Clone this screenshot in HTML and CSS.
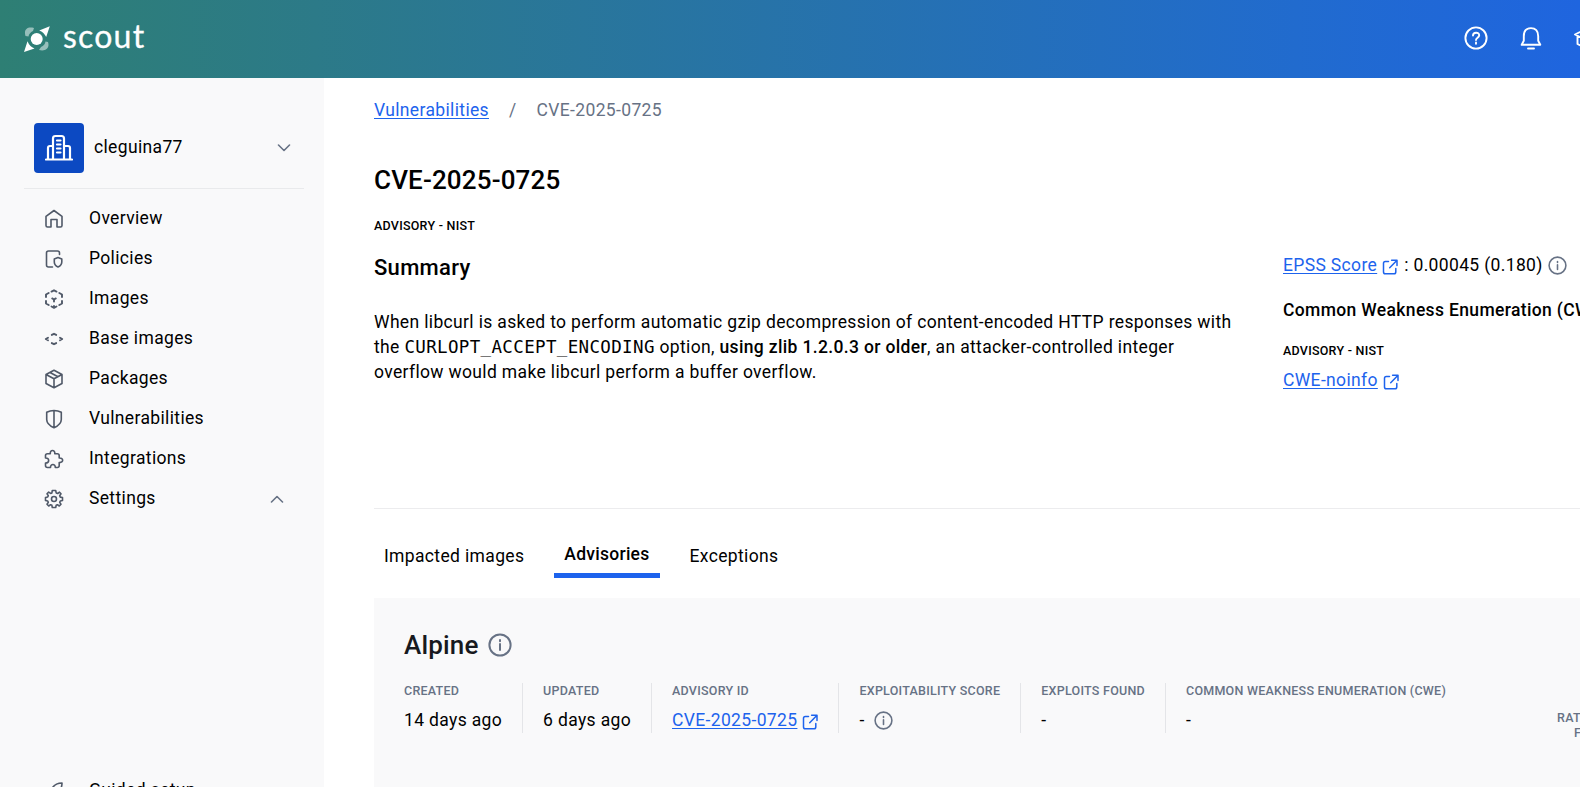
FILE: index.html
```html
<!DOCTYPE html>
<html lang="en">
<head>
<meta charset="utf-8">
<title>CVE-2025-0725 | Docker Scout</title>
<link rel="stylesheet" href="styles.css">
</head>
<body>
<svg class="defs" width="0" height="0" aria-hidden="true">
  <symbol id="ext" viewBox="0 0 16 16"><path d="M6.5 2.4H3.3Q1.5 2.4 1.5 4.2V13Q1.5 14.8 3.3 14.8H12Q13.8 14.8 13.8 13V9.6M9.6 1.3H15V6.6M14.8 1.5 7.7 8.8"/></symbol>
  <symbol id="info" viewBox="0 0 24 24"><circle cx="12" cy="12" r="10.6"/><path d="M12 11V17M12 7.1V8.2"/></symbol>
</svg>
<header class="topbar">
  <a class="brand">
    <svg class="brand-mark" viewBox="0 0 26 26"><g fill="#fff"><path opacity=".5" d="M1.500 10C-.5 4 3 .2 10 2L9 5Q5 7 4.500 10.500ZM24 16C26 21.500 22 26 15 24L17 21Q21 19 21.500 15.500Z"/><circle cx="12.7" cy="13" r="6"/><path d="M15.2 4.4 25.8.2 22.2 11Q20 6.300 15.200 4.400ZM10.500 22.500 0 26 3.500 15.200Q5.500 20.500 10.500 22.500Z"/></g></svg>
    <span class="brand-name">scout</span>
  </a>
  <div class="top-actions">
    <svg class="top-icon" viewBox="0 0 24 24"><circle cx="12" cy="12" r="10.6"/><path d="M9 9.500C9 5.800 15.200 5.800 15.200 9.300 15.200 11.700 12 11.700 12 14M12 16.500V17.700"/></svg>
    <svg class="top-icon" viewBox="0 0 24 24"><path d="M2.700 18.800H21.300L19.200 14.800V10.200C19.200 5 16.500 2.100 12 2.100S4.800 5 4.800 10.200V14.800ZM9 22.500H15"/></svg>
    <svg class="top-icon" viewBox="0 0 24 24"><path d="M1 8.500 12 3 23 8.500 12 14ZM3.500 10V18Q12 23 20.500 18V10"/></svg>
  </div>
</header>
<div class="layout">
  <aside class="sidebar">
    <div class="account">
      <span class="avatar"><svg viewBox="0 0 28 28"><path d="M1 25.500H27M8 25V4.500Q8 2 10.500 2H16.500Q19 2 19 4.500V25M8 12H5Q3 12 3 14V25M19 12H23Q25 12 25 14V25M12 6.500H15.500M12 10.500H15.500M12 14.500H15.500M12 18.500H15.500"/></svg></span>
      <span class="account-name">cleguina77</span>
      <svg class="chevron" viewBox="0 0 14 8"><path d="M1.500 1 7 6.500 12.500 1"/></svg>
    </div>
    <nav class="nav">
      <a class="nav-item"><svg viewBox="0 0 20 20"><path d="M2 7.300 10 1.500 18 7.300V16.500Q18 18 16.500 18H13V10.500H7V18H3.500Q2 18 2 16.500Z"/></svg>Overview</a>
      <a class="nav-item"><svg viewBox="0 0 20 20"><path d="M8.500 18H4.500Q2.500 18 2.500 16V4Q2.500 2 4.500 2H13.500Q15.500 2 15.500 4V5.500M14 8.500 17.800 10V13Q17.800 16.300 14 18 10.300 16.300 10.300 13V10Z"/></svg>Policies</a>
      <a class="nav-item"><svg class="heavy" viewBox="0 0 20 20"><path d="M7.500 2.600 10 1.300 12.500 2.600M15.300 4 18 5.500V8M18 12V14.500L15.300 16M12.500 17.500 10 18.800 7.500 17.500M4.700 16 2 14.500V12M2 8V5.500L4.700 4M10 10.500V12.500M10 10.500 8.200 9.400M10 10.500 11.800 9.400M10 17V18.500"/></svg>Images</a>
      <a class="nav-item"><svg class="heavy" viewBox="0 0 20 20"><path d="M7.800 5.900 10 4.800 12.200 5.900M12.200 14.100 10 15.200 7.800 14.100M4 8.700 1.800 10 4 11.300M16 8.700 18.200 10 16 11.300"/></svg>Base images</a>
      <a class="nav-item"><svg viewBox="0 0 20 20"><path d="M10 1.300 18 5.500V14.500L10 18.700 2 14.500V5.500ZM2 5.500 10 9.800 18 5.500M10 9.800V18.700M6 3.500 14 7.700"/></svg>Packages</a>
      <a class="nav-item"><svg viewBox="0 0 20 20"><path d="M10 1.500Q14 1.500 17.300 3.300V10.500Q17.300 15.500 10 18.700 2.700 15.500 2.700 10.500V3.300Q6 1.500 10 1.500ZM10 1.500V18.500"/></svg>Vulnerabilities</a>
      <a class="nav-item"><svg viewBox="0 0 20 20"><path d="M6.300 4.700C5.800 .4 11.200 .4 10.800 4.700H13.300Q15.200 4.700 15.200 6.600V9C19.800 8.500 19.800 14 15.200 13.600V16.500Q15.200 18.500 13.300 18.500H11.300C11.500 14.500 6.300 14.500 6.500 18.500H3.500Q1.500 18.500 1.500 16.500V14C5.700 14 5.700 8.800 1.500 9V6.600Q1.500 4.700 3.500 4.700Z"/></svg>Integrations</a>
      <a class="nav-item"><svg viewBox="0 0 20 20"><path d="M8.300 1.500H11.700L12.200 3.900 13.700 4.500 15.500 3.200 17 4.800 15.700 6.700 16.300 8.100 18.500 8.500V11.500L16.300 12 15.700 13.400 17 15.200 15.300 17 13.400 15.700 12.200 16.300 11.700 18.500H8.300L7.900 16.300 6.600 15.700 4.700 17 3 15.300 4.300 13.400 3.700 12 1.500 11.500V8.500L3.700 8 4.300 6.600 3 4.800 4.700 3.100 6.600 4.400 7.900 3.900Z"/><circle cx="10" cy="10" r="2.500"/></svg>Settings<svg class="chevron nav-chevron" viewBox="0 0 14 8"><path d="M1.500 7 7 1.500 12.500 7"/></svg></a>
    </nav>
    <nav class="nav nav-bottom">
      <a class="nav-item"><svg viewBox="0 0 20 20"><path d="M6 12C8 5 12 2 18 2 18 8 15 12 8 14ZM7.500 8H4.500L2 12H6M12 12.500V15.500L8 18V14"/></svg>Guided setup</a>
    </nav>
  </aside>
  <main class="main">
    <div class="breadcrumb"><a class="link">Vulnerabilities</a><span class="slash">/</span><span>CVE-2025-0725</span></div>
    <h1 class="title">CVE-2025-0725</h1>
    <div class="source">ADVISORY - NIST</div>
    <div class="details">
      <section class="summary">
        <h2>Summary</h2>
        <p>When libcurl is asked to perform automatic gzip decompression of content-encoded HTTP responses with the <code>CURLOPT_ACCEPT_ENCODING</code> option, <strong>using zlib 1.2.0.3 or older</strong>, an attacker-controlled integer overflow would make libcurl perform a buffer overflow.</p>
      </section>
      <section class="facts">
        <div class="epss"><a class="link">EPSS Score</a><svg class="ext"><use href="#ext"/></svg><span>: 0.00045 (0.180)</span><svg class="info"><use href="#info"/></svg></div>
        <h3>Common Weakness Enumeration (CWE)</h3>
        <div class="source">ADVISORY - NIST</div>
        <div class="cwe"><a class="link">CWE-noinfo</a><svg class="ext"><use href="#ext"/></svg></div>
      </section>
    </div>
    <div class="tabs"><a class="tab">Impacted images</a><a class="tab active">Advisories</a><a class="tab">Exceptions</a></div>
    <section class="card">
      <h2 class="card-title">Alpine<svg class="info info-large"><use href="#info"/></svg></h2>
      <div class="card-row">
        <div class="fact"><span class="label">CREATED</span><span class="value">14 days ago</span></div>
        <div class="fact"><span class="label">UPDATED</span><span class="value">6 days ago</span></div>
        <div class="fact"><span class="label">ADVISORY ID</span><span class="value"><a class="link">CVE-2025-0725</a><svg class="ext"><use href="#ext"/></svg></span></div>
        <div class="fact"><span class="label">EXPLOITABILITY SCORE</span><span class="value">-<svg class="info"><use href="#info"/></svg></span></div>
        <div class="fact"><span class="label">EXPLOITS FOUND</span><span class="value">-</span></div>
        <div class="fact"><span class="label">COMMON WEAKNESS ENUMERATION (CWE)</span><span class="value">-</span></div>
        <div class="rating"><span>RATINGS</span><span>FOR</span></div>
      </div>
    </section>
  </main>
</div>
</body>
</html>
```
FILE: styles.css
```css
* { box-sizing: border-box; }
html { overflow: hidden; }
body {
  margin: 0; height: 787px; overflow: hidden; background: #fff; color: #000;
  font: 17.5px/25px Roboto, sans-serif; letter-spacing: 0.35px;
}
svg { fill: none; stroke: currentColor; stroke-linejoin: round; stroke-linecap: round; flex: none; }
.defs { display: none; }
h1, h2, h3, p { margin: 0; font-weight: 500; }
p { font-weight: 400; }
.topbar {
  height: 78px; display: flex; align-items: center; justify-content: space-between; padding: 0 0 0 24px;
  color: #fff; background: linear-gradient(90deg, #2e7f74 0, #2c7a88 20%, #216bce 82%, #1f65df 100%); overflow: hidden;
}
.brand { display: flex; align-items: center; gap: 13px; margin-top: -1px; }
.brand-mark { width: 26px; height: 26px; stroke: none; }
.brand-name { font: 32px/40px Lato, sans-serif; letter-spacing: 1.2px; margin-top: -6px; -webkit-text-stroke: 0.3px #fff; }
.top-actions { display: flex; gap: 31px; margin: -3px -18px 0 0; }
.top-icon { width: 24px; height: 24px; stroke-width: 1.9; }
.layout { display: flex; height: 709px; }
.sidebar { width: 324px; flex: none; background: #f9f9fa; padding: 45px 20px 0 24px; display: flex; flex-direction: column; }
.account { height: 66px; border-bottom: 1px solid #e9eaec; padding: 0 13px 15px 10px; display: flex; align-items: center; flex: none; }
.avatar { width: 50px; height: 50px; border-radius: 4px; background: #0c49c2; display: flex; align-items: center; justify-content: center; color: #fff; margin-right: 10px; }
.avatar svg { width: 28px; height: 28px; stroke-width: 2.2; }
.account-name { flex: 1; margin-top: -2px; }
.chevron { width: 14px; height: 8px; color: #677285; stroke-width: 1.6; }
.nav { padding: 9px 20px 0 20px; }
.nav-item { display: flex; align-items: center; height: 40px; }
.nav-item > svg:first-child { width: 20px; height: 20px; color: #505968; stroke-width: 1.6; margin: 2px 25px 0 0; }
.nav-item > svg.heavy:first-child { stroke-width: 1.9; }
.nav-item .nav-chevron { margin-left: auto; margin-top: 2px; }
.nav-bottom { margin-top: 243px; }
.main { width: 1340px; flex: none; padding: 20px 0 0 50px; }
.link { color: #1d63ed; text-decoration: underline; text-underline-offset: 2px; }
.breadcrumb { display: flex; color: #677285; }
.slash { margin: 0 20px; }
.title { font-size: 26px; line-height: 32px; margin-top: 41px; letter-spacing: 0.16px; }
.source { font-size: 12.5px; line-height: 20px; font-weight: 500; margin-top: 20px; letter-spacing: 0.25px; }
.details { display: flex; height: 273px; border-bottom: 1px solid #ececee; padding-top: 17px; }
.summary { width: 863px; margin-right: 46px; flex: none; }
.summary h2 { font-size: 22px; line-height: 30px; margin-bottom: 27px; letter-spacing: 0.3px; }
code { font-family: "DejaVu Sans Mono", monospace; font-size: 17.5px; line-height: 1; }
strong { font-weight: 500; }
.facts { flex: none; }
.facts h3 { font-size: 17.5px; line-height: 25px; margin-top: 20px; }
.facts .source { margin-top: 18px; }
.cwe { margin-top: 7px; }
.epss, .cwe, .value { display: flex; align-items: center; }
.ext { width: 16px; height: 16px; color: #1d63ed; stroke-width: 1.5; margin: 3px 6px 0 5px; }
.info { width: 19px; height: 19px; color: #677285; stroke-width: 2; margin-left: 5px; }
.info-large { width: 24px; height: 24px; margin-left: 10px; stroke-width: 2; }
.tabs { display: flex; padding-top: 29px; }
.tab { padding: 6px 10px; margin-right: 20px; height: 40px; line-height: 25px; }
.tab.active { font-weight: 500; border-bottom: 5px solid #1d63ed; padding-top: 4px; letter-spacing: 0.26px; }
.card { background: #f9f9fa; margin-top: 20px; padding: 30px; height: 250px; }
.card-title { font-size: 26px; line-height: 34px; display: flex; align-items: center; color: #17191e; letter-spacing: 0.16px; }
.card-row { display: flex; margin-top: 21px; }
.fact { height: 50px; display: flex; flex-direction: column; padding-right: 20px; margin-right: 20px; border-right: 1px solid #e4e5e8; white-space: nowrap; }
.value .ext { margin-right: 0; }
.value .info { margin: -1px 0 0 9px; }
.label { font-size: 12.5px; line-height: 16px; font-weight: 500; color: #677285; margin-bottom: 9px; letter-spacing: 0.25px; }
.fact:nth-child(6) { border: 0; margin-right: 91px; }
.rating { display: flex; flex-direction: column; align-items: center; width: 58px; font-size: 12.5px; line-height: 15px; font-weight: 500; color: #677285; padding-top: 27px; letter-spacing: 0.25px; }
.rating span:first-child { align-self: flex-start; }
```
